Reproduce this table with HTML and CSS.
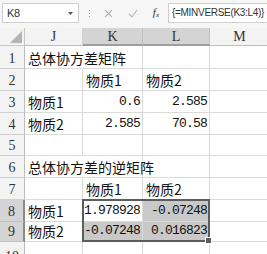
FILE: index.html
```html
<!DOCTYPE html>
<html lang="zh">
<head>
<meta charset="utf-8">
<title>总体协方差矩阵</title>
<link rel="stylesheet" href="styles.css">
</head>
<body>
<div class="app">
  <div class="formula-bar">
    <div class="name-box">
      <span class="name">K8</span>
      <svg class="caret" width="5" height="3" viewBox="0 0 5 3"><path d="M0 0h5L2.5 3z" fill="#555"/></svg>
    </div>
    <div class="grip"><i></i><i></i><i></i></div>
    <div class="actions">
      <svg class="act" width="9" height="9" viewBox="0 0 9 9"><path d="M1 1l7 7M8 1L1 8" stroke="#b5b5b5" stroke-width="1.1" fill="none"/></svg>
      <svg class="act" width="10" height="9" viewBox="0 0 10 9"><path d="M1 5l3 3 5-7" stroke="#b5b5b5" stroke-width="1.1" fill="none"/></svg>
      <span class="fx">f<sub>x</sub></span>
    </div>
    <div class="formula">{=MINVERSE(K3:L4)}</div>
  </div>

  <div class="sheet">
    <div class="corner"><svg width="12" height="12" viewBox="0 0 12 12"><path d="M12 0v12H0z" fill="#b4b4b4"/></svg></div>
    <div class="col-h">J</div>
    <div class="col-h sel">K</div>
    <div class="col-h sel">L</div>
    <div class="col-h">M</div>

    <div class="row-h">1</div>
    <div class="cell txt title">总体协方差矩阵</div><div class="cell"></div><div class="cell"></div><div class="cell"></div>

    <div class="row-h">2</div>
    <div class="cell"></div><div class="cell txt">物质1</div><div class="cell txt">物质2</div><div class="cell"></div>

    <div class="row-h">3</div>
    <div class="cell txt">物质1</div><div class="cell num">0.6</div><div class="cell num">2.585</div><div class="cell"></div>

    <div class="row-h">4</div>
    <div class="cell txt">物质2</div><div class="cell num">2.585</div><div class="cell num">70.58</div><div class="cell"></div>

    <div class="row-h">5</div>
    <div class="cell"></div><div class="cell"></div><div class="cell"></div><div class="cell"></div>

    <div class="row-h">6</div>
    <div class="cell txt title">总体协方差的逆矩阵</div><div class="cell"></div><div class="cell"></div><div class="cell"></div>

    <div class="row-h">7</div>
    <div class="cell"></div><div class="cell txt">物质1</div><div class="cell txt">物质2</div><div class="cell"></div>

    <div class="row-h sel">8</div>
    <div class="cell txt">物质1</div><div class="cell num">1.978928</div><div class="cell num picked">-0.07248</div><div class="cell"></div>

    <div class="row-h sel">9</div>
    <div class="cell txt">物质2</div><div class="cell num picked">-0.07248</div><div class="cell num picked">0.016823</div><div class="cell"></div>

    <div class="row-h last">10</div>
    <div class="cell"></div><div class="cell"></div><div class="cell"></div><div class="cell"></div>

    <div class="selection"><span class="handle"></span></div>
  </div>
</div>
</body>
</html>
```

FILE: styles.css
```css
html, body {
  margin: 0;
  padding: 0;
  background: #ffffff;
}

.app {
  width: 267px;
  height: 254px;
  overflow: hidden;
  font-family: "Liberation Sans", Arial, sans-serif;
  color: #1a1a1a;
}

/* ---- formula bar ---- */
.formula-bar {
  height: 28px;
  box-sizing: border-box;
  display: flex;
  align-items: flex-start;
  padding-top: 3px;
  background: #f6f6f6;
}

.name-box {
  width: 77px;
  height: 20px;
  margin-left: 2px;
  box-sizing: border-box;
  border: 1px solid #cfcfcf;
  background: #ffffff;
  display: flex;
  align-items: center;
  justify-content: space-between;
  padding: 0 5px 0 4px;
}

.name {
  font-size: 11px;
  letter-spacing: -0.4px;
  color: #333;
}

.grip {
  width: 20px;
  height: 20px;
  display: flex;
  flex-direction: column;
  align-items: center;
  justify-content: center;
  gap: 2px;
}

.grip i {
  width: 1px;
  height: 1px;
  background: #a8a8a8;
}

.actions {
  width: 69px;
  height: 20px;
  display: flex;
  align-items: center;
  justify-content: space-between;
  padding: 0 9px 0 5px;
  box-sizing: border-box;
}

.fx {
  font-family: "Liberation Serif", serif;
  font-style: italic;
  font-size: 11px;
  color: #333;
  line-height: 1;
}

.fx sub {
  font-size: 7px;
  vertical-align: -1px;
}

.formula {
  flex: 1;
  height: 20px;
  box-sizing: border-box;
  border: 1px solid #cfcfcf;
  border-right: 0;
  background: #ffffff;
  font-size: 10px;
  letter-spacing: -0.3px;
  line-height: 18px;
  padding-left: 3px;
  color: #333;
  white-space: nowrap;
  overflow: hidden;
}

/* ---- worksheet grid ---- */
.sheet {
  display: grid;
  grid-template-columns: 25px 58px 60px 67px 60px;
  grid-template-rows: 18px 23px 22px 22px 22px 21px 22px 22px 22px 20px 24px;
  position: relative;
}

.corner,
.col-h,
.row-h,
.cell {
  box-sizing: border-box;
  border-right: 1px solid #dadada;
  border-bottom: 1px solid #dadada;
  overflow: hidden;
  white-space: nowrap;
}

.corner {
  background: #f3f3f3;
  border-color: #c8c8c8;
  display: flex;
  align-items: flex-end;
  justify-content: flex-end;
  padding: 0 2px 2px 0;
}

.col-h {
  background: #f3f3f3;
  border-right-color: #cfcfcf;
  border-bottom-color: #bdbdbd;
  font-family: "Liberation Serif", serif;
  font-size: 14px;
  text-align: center;
  line-height: 18px;
  color: #333;
}

.col-h.sel {
  background: #d4d4d4;
  border-bottom: 2px solid #9e9e9e;
  border-right-color: #c0c0c0;
}

.row-h {
  background: #f3f3f3;
  border-right-color: #bdbdbd;
  border-bottom-color: #cfcfcf;
  font-family: "Liberation Serif", serif;
  font-size: 14px;
  display: flex;
  align-items: flex-end;
  justify-content: center;
  padding-bottom: 1px;
  color: #333;
}

.row-h.last {
  align-items: flex-start;
  padding-top: 7px;
  line-height: 16px;
}

.row-h.sel {
  background: #d4d4d4;
  border-right: 2px solid #8a8a8a;
  border-bottom-color: #c0c0c0;
}

.cell {
  display: flex;
  align-items: flex-end;
  padding: 0 2px 2px 3px;
  font-size: 14px;
  color: #111;
}

.cell.txt {
  font-family: "Noto Sans CJK SC", "Liberation Sans", sans-serif;
  line-height: 18px;
  padding-bottom: 1px;
}

.cell.title {
  overflow: visible;
  border-right-color: transparent;
  position: relative;
  z-index: 1;
}

.cell.num {
  justify-content: flex-end;
  font-family: "Liberation Mono", monospace;
  font-size: 13px;
  letter-spacing: -0.8px;
  line-height: 16px;
  padding-right: 2px;
}

.cell.picked {
  background: #c9c9c9;
}

/* selected range K8:L9, drawn over the cells */
.selection {
  position: absolute;
  grid-column: 3 / 5;
  grid-row: 9 / 11;
  top: -1px;
  left: -1px;
  right: 0;
  bottom: 0;
  border: 2px solid #5c5c5c;
  pointer-events: none;
  z-index: 2;
}

.handle {
  position: absolute;
  right: -4px;
  bottom: -4px;
  width: 5px;
  height: 5px;
  background: #5c5c5c;
  border: 1px solid #ffffff;
}
```
